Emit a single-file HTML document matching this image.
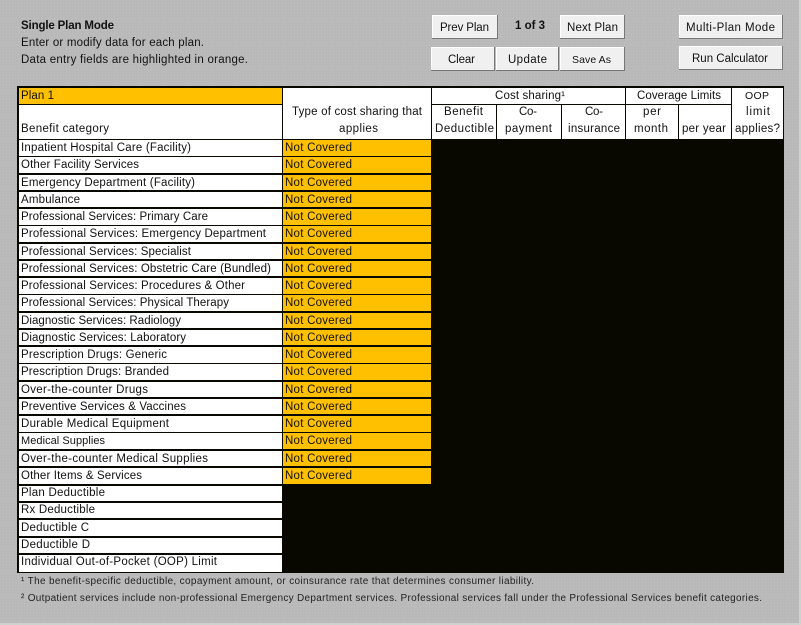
<!DOCTYPE html>
<html><head><meta charset="utf-8"><style>
html,body{margin:0;padding:0;background:#bababa;width:801px;height:625px;overflow:hidden}
svg{display:block}
text{font-family:"Liberation Sans",sans-serif;font-size:11.5px;fill:#111}
.b{font-weight:bold}.f{font-size:10px;fill:#222}.s{font-size:10.5px}.m{font-size:11px}
</style></head><body>
<svg width="801" height="625" viewBox="0 0 801 625" xmlns="http://www.w3.org/2000/svg" shape-rendering="crispEdges">
<defs><pattern id="d" width="3" height="3" patternUnits="userSpaceOnUse"><rect width="3" height="3" fill="#b9b9b9"/><rect width="1" height="1" fill="#c0c0c0"/></pattern></defs>
<rect width="801" height="625" fill="url(#d)"/>
<rect x="799" width="2" height="625" fill="#d0d0d0"/><rect y="623" width="801" height="2" fill="#d0d0d0"/>

<text class="b" x="21" y="29" textLength="93">Single Plan Mode</text>
<text x="21" y="46" textLength="183">Enter or modify data for each plan.</text>
<text x="21" y="63" textLength="227">Data entry fields are highlighted in orange.</text>

<g fill="#f0f0f0" stroke="#777">
<rect x="432.5" y="15.5" width="65" height="23"/><rect x="560.5" y="15.5" width="64" height="23"/>
<rect x="431.5" y="47.5" width="63" height="23"/><rect x="496.5" y="47.5" width="62" height="23"/><rect x="560.5" y="47.5" width="64" height="23"/>
<rect x="679.5" y="15.5" width="103" height="23"/><rect x="679.5" y="46.5" width="103" height="23"/>
</g>
<g fill="#fff"><rect x="432" y="15" width="65" height="1"/><rect x="560" y="15" width="64" height="1"/><rect x="431" y="47" width="63" height="1"/><rect x="496" y="47" width="62" height="1"/><rect x="560" y="47" width="64" height="1"/><rect x="679" y="15" width="103" height="1"/><rect x="679" y="46" width="103" height="1"/>
<rect x="432" y="15" width="1" height="23"/><rect x="560" y="15" width="1" height="23"/><rect x="431" y="47" width="1" height="23"/><rect x="496" y="47" width="1" height="23"/><rect x="560" y="47" width="1" height="23"/><rect x="679" y="15" width="1" height="23"/><rect x="679" y="46" width="1" height="23"/></g>
<text x="440" y="31" textLength="49">Prev Plan</text>
<text class="b" x="515" y="29" textLength="30">1 of 3</text>
<text x="567" y="31" textLength="51">Next Plan</text>
<text x="448" y="63" textLength="27">Clear</text>
<text x="508" y="63" textLength="39">Update</text>
<text class="s" x="572" y="63" textLength="39">Save As</text>
<text x="686" y="31" textLength="89">Multi-Plan Mode</text>
<text x="692" y="62" textLength="76">Run Calculator</text>

<rect x="17" y="86" width="767" height="487" fill="#080700"/>
<rect x="19" y="88" width="263" height="16" fill="#ffc000"/>
<rect x="19" y="105" width="263" height="34" fill="#fff"/>
<rect x="283" y="88" width="148" height="51" fill="#fff"/>
<rect x="432" y="88" width="351" height="51" fill="#fff"/>
<g fill="#080700">
<rect x="432" y="104" width="299" height="1"/>
<rect x="496" y="105" width="1" height="34"/><rect x="561" y="105" width="1" height="34"/><rect x="625" y="88" width="1" height="51"/><rect x="678" y="105" width="1" height="34"/><rect x="731" y="88" width="1" height="51"/>
</g>
<g fill="#fff">
<rect x="19" y="140" width="263" height="16"/><rect x="19" y="157" width="263" height="16"/><rect x="19" y="175" width="263" height="15"/><rect x="19" y="192" width="263" height="15"/><rect x="19" y="209" width="263" height="16"/><rect x="19" y="226" width="263" height="16"/><rect x="19" y="244" width="263" height="15"/><rect x="19" y="261" width="263" height="15"/><rect x="19" y="278" width="263" height="16"/><rect x="19" y="295" width="263" height="16"/><rect x="19" y="313" width="263" height="15"/><rect x="19" y="330" width="263" height="15"/><rect x="19" y="347" width="263" height="16"/><rect x="19" y="364" width="263" height="16"/><rect x="19" y="382" width="263" height="15"/><rect x="19" y="399" width="263" height="15"/><rect x="19" y="416" width="263" height="16"/><rect x="19" y="433" width="263" height="16"/><rect x="19" y="451" width="263" height="15"/><rect x="19" y="468" width="263" height="16"/><rect x="19" y="486" width="263" height="15"/><rect x="19" y="503" width="263" height="15"/><rect x="19" y="520" width="263" height="16"/><rect x="19" y="538" width="263" height="15"/><rect x="19" y="555" width="263" height="17"/>
</g>
<g fill="#ffc000">
<rect x="283" y="140" width="148" height="16"/><rect x="283" y="157" width="148" height="16"/><rect x="283" y="175" width="148" height="15"/><rect x="283" y="192" width="148" height="15"/><rect x="283" y="209" width="148" height="16"/><rect x="283" y="226" width="148" height="16"/><rect x="283" y="244" width="148" height="15"/><rect x="283" y="261" width="148" height="15"/><rect x="283" y="278" width="148" height="16"/><rect x="283" y="295" width="148" height="16"/><rect x="283" y="313" width="148" height="15"/><rect x="283" y="330" width="148" height="15"/><rect x="283" y="347" width="148" height="16"/><rect x="283" y="364" width="148" height="16"/><rect x="283" y="382" width="148" height="15"/><rect x="283" y="399" width="148" height="15"/><rect x="283" y="416" width="148" height="16"/><rect x="283" y="433" width="148" height="16"/><rect x="283" y="451" width="148" height="15"/><rect x="283" y="468" width="148" height="16"/>
</g>

<text x="21" y="99" textLength="33">Plan 1</text>
<text x="21" y="132" textLength="88">Benefit category</text>
<text x="292" y="115" textLength="130">Type of cost sharing that</text>
<text x="339" y="132" textLength="39">applies</text>
<text x="495" y="99" textLength="70">Cost sharing¹</text>
<text x="637" y="99" textLength="84">Coverage Limits</text>
<text class="s" x="745" y="99" textLength="24">OOP</text>
<text x="746" y="115" textLength="24">limit</text>
<text x="735" y="132" textLength="45">applies?</text>
<text x="444" y="115" textLength="39">Benefit</text>
<text x="435" y="132" textLength="59">Deductible</text>
<text x="519" y="115" textLength="18">Co-</text>
<text x="505" y="132" textLength="47">payment</text>
<text x="585" y="115" textLength="18">Co-</text>
<text x="568" y="132" textLength="52">insurance</text>
<text x="643" y="115" textLength="18">per</text>
<text x="634" y="132" textLength="34">month</text>
<text x="682" y="132" textLength="44">per year</text>

<text x="21" y="151" textLength="170">Inpatient Hospital Care (Facility)</text>
<text x="21" y="168" textLength="118">Other Facility Services</text>
<text x="21" y="186" textLength="174">Emergency Department (Facility)</text>
<text x="21" y="203" textLength="59">Ambulance</text>
<text x="21" y="220" textLength="187">Professional Services: Primary Care</text>
<text x="21" y="237" textLength="245">Professional Services: Emergency Department</text>
<text x="21" y="255" textLength="170">Professional Services: Specialist</text>
<text x="21" y="272" textLength="250">Professional Services: Obstetric Care (Bundled)</text>
<text x="21" y="289" textLength="224">Professional Services: Procedures &amp; Other</text>
<text x="21" y="306" textLength="208">Professional Services: Physical Therapy</text>
<text x="21" y="324" textLength="160">Diagnostic Services: Radiology</text>
<text x="21" y="341" textLength="165">Diagnostic Services: Laboratory</text>
<text x="21" y="358" textLength="146">Prescription Drugs: Generic</text>
<text x="21" y="375" textLength="148">Prescription Drugs: Branded</text>
<text x="21" y="393" textLength="127">Over-the-counter Drugs</text>
<text x="21" y="410" textLength="165">Preventive Services &amp; Vaccines</text>
<text x="21" y="427" textLength="148">Durable Medical Equipment</text>
<text class="m" x="21" y="444" textLength="84">Medical Supplies</text>
<text x="21" y="462" textLength="187">Over-the-counter Medical Supplies</text>
<text x="21" y="479" textLength="121">Other Items &amp; Services</text>
<text x="21" y="496" textLength="84">Plan Deductible</text>
<text x="21" y="513" textLength="74">Rx Deductible</text>
<text x="21" y="531" textLength="68">Deductible C</text>
<text x="21" y="548" textLength="69">Deductible D</text>
<text x="21" y="565" textLength="196">Individual Out-of-Pocket (OOP) Limit</text>

<text x="285" y="151" textLength="67">Not Covered</text><text x="285" y="168" textLength="67">Not Covered</text><text x="285" y="186" textLength="67">Not Covered</text><text x="285" y="203" textLength="67">Not Covered</text><text x="285" y="220" textLength="67">Not Covered</text><text x="285" y="237" textLength="67">Not Covered</text><text x="285" y="255" textLength="67">Not Covered</text><text x="285" y="272" textLength="67">Not Covered</text><text x="285" y="289" textLength="67">Not Covered</text><text x="285" y="306" textLength="67">Not Covered</text><text x="285" y="324" textLength="67">Not Covered</text><text x="285" y="341" textLength="67">Not Covered</text><text x="285" y="358" textLength="67">Not Covered</text><text x="285" y="375" textLength="67">Not Covered</text><text x="285" y="393" textLength="67">Not Covered</text><text x="285" y="410" textLength="67">Not Covered</text><text x="285" y="427" textLength="67">Not Covered</text><text x="285" y="444" textLength="67">Not Covered</text><text x="285" y="462" textLength="67">Not Covered</text><text x="285" y="479" textLength="67">Not Covered</text>

<text class="f" x="21" y="584" textLength="513">¹ The benefit-specific deductible, copayment amount, or coinsurance rate that determines consumer liability.</text>
<text class="f" x="21" y="601" textLength="741">² Outpatient services include non-professional Emergency Department services. Professional services fall under the Professional Services benefit categories.</text>
</svg>
</body></html>
